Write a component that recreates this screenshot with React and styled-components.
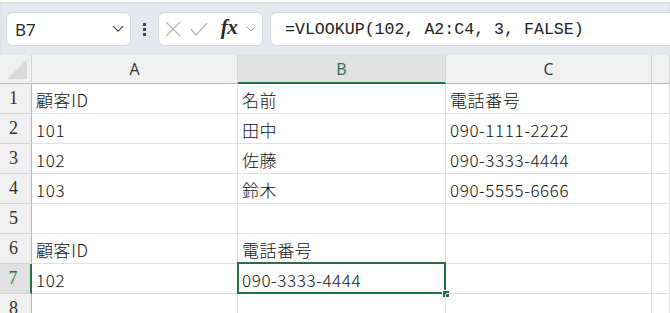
import React from 'react';
import styled, { createGlobalStyle } from 'styled-components';

const Global = createGlobalStyle`
  html, body { margin: 0; padding: 0; background: #fff; }
  body { font-family: "Noto Sans CJK JP", "Noto Sans", sans-serif; }
`;

const Page = styled.div`
  width: 670px;
  height: 313px;
  overflow: hidden;
  position: relative;
  background: #fff;
`;

const Toolbar = styled.div`
  height: 55px;
  box-sizing: border-box;
  background: #e5e8ee;
  padding: 10px 0 0 6px;
  display: flex;
  align-items: flex-start;
  border-top: 2px solid #fff;
  box-shadow: inset 0 1px 2px rgba(0,0,0,0.08);
`;

const Box = styled.div`
  height: 34px;
  box-sizing: border-box;
  background: #fff;
  border: 1px solid #d4d7dc;
  border-radius: 6px;
  display: flex;
  align-items: center;
`;

const NameBox = styled(Box)`
  width: 125px;
  padding: 0 6px 0 8px;
  justify-content: space-between;
  font-family: "Open Sans", "Liberation Sans", sans-serif;
  font-size: 17px;
  color: #222;
`;

const Dots = styled.div`
  width: 27px;
  height: 34px;
  display: flex;
  flex-direction: column;
  align-items: center;
  justify-content: center;
  gap: 2px;
  span {
    width: 3px;
    height: 3px;
    background: #444;
  }
`;

const FxBox = styled(Box)`
  width: 105px;
  padding: 0 6px;
  justify-content: space-between;
`;

const Fx = styled.span`
  font-family: "Liberation Serif", serif;
  font-style: italic;
  font-weight: bold;
  font-size: 21px;
  color: #2a2a2a;
  letter-spacing: -0.5px;
  margin-left: 4px;
  margin-top: -4px;
`;

const FormulaBox = styled(Box)`
  flex: 1;
  margin-left: 7px;
  margin-right: -10px;
  padding-left: 14px;
  font-family: "Liberation Mono", "DejaVu Sans Mono", monospace;
  font-size: 16.6px;
  color: #222;
`;

const Grid = styled.div`
  display: grid;
  grid-template-columns: 32px 206px 208px 206px 1fr;
  grid-auto-rows: 30px;
  grid-template-rows: 29px;
`;

const Corner = styled.div`
  background: #f0f0f0;
  border-right: 1px solid #d4d4d4;
  border-bottom: 1px solid #b9b9b9;
  position: relative;
  box-sizing: border-box;
  &::after {
    content: '';
    position: absolute;
    right: 4px;
    bottom: 4px;
    width: 0;
    height: 0;
    border-left: 20px solid transparent;
    border-bottom: 20px solid #d9d9d9;
  }
`;

const ColHead = styled.div`
  box-sizing: border-box;
  background: ${p => (p.$active ? '#e1e1e1' : '#f0f0f0')};
  color: ${p => (p.$active ? '#217346' : '#333')};
  border-right: 1px solid #d4d4d4;
  border-bottom: ${p => (p.$active ? '2px solid #217346' : '1px solid #b9b9b9')};
  display: flex;
  align-items: center;
  justify-content: center;
  font-family: "Open Sans", "Liberation Sans", sans-serif;
  font-size: 16px;
  padding-top: ${p => (p.$active ? '1px' : '0')};
`;

const RowHead = styled.div`
  box-sizing: border-box;
  background: ${p => (p.$active ? '#e1e1e1' : '#f0f0f0')};
  color: ${p => (p.$active ? '#217346' : '#333')};
  border-right: ${p => (p.$active ? '2px solid #217346' : '1px solid #b9b9b9')};
  border-bottom: 1px solid #d4d4d4;
  display: flex;
  align-items: center;
  justify-content: center;
  font-family: "Liberation Serif", "DejaVu Serif", serif;
  font-size: 18px;
  padding-right: 4px;
`;

const Cell = styled.div`
  box-sizing: border-box;
  border-right: 1px solid #e1e1e1;
  border-bottom: 1px solid #e1e1e1;
  display: flex;
  align-items: center;
  padding: 1px 0 0 4px;
  font-size: 17px;
  font-weight: 300;
  letter-spacing: 0.6px;
  color: #111;
  white-space: nowrap;
  position: relative;
`;

const Selection = styled.div`
  position: absolute;
  left: -1px;
  top: -2px;
  right: -1px;
  bottom: -1px;
  border: 2px solid #217346;
  pointer-events: none;
  &::after {
    content: '';
    position: absolute;
    right: -5px;
    bottom: -5px;
    width: 6px;
    height: 6px;
    background: #217346;
    border: 1px solid #fff;
    border-right: none;
    border-bottom: none;
  }
`;

const Chevron = ({ color = '#444', size = 12 }) => (
  <svg width={size} height={size * 0.6} viewBox="0 0 12 7" fill="none">
    <path d="M1 1l5 5 5-5" stroke={color} strokeWidth="1.2" />
  </svg>
);

const rows = [
  ['顧客ID', '名前', '電話番号'],
  ['101', '田中', '090-1111-2222'],
  ['102', '佐藤', '090-3333-4444'],
  ['103', '鈴木', '090-5555-6666'],
  ['', '', ''],
  ['顧客ID', '電話番号', ''],
  ['102', '090-3333-4444', ''],
  ['', '', ''],
];

export default function App() {
  return (
    <Page>
      <Global />
      <Toolbar>
        <NameBox>
          <span>B7</span>
          <Chevron />
        </NameBox>
        <Dots>
          <span />
          <span />
          <span />
        </Dots>
        <FxBox>
          <svg width="16" height="16" viewBox="0 0 16 16" fill="none">
            <path d="M1 1l14 14M15 1L1 15" stroke="#b5b5b5" strokeWidth="1.3" />
          </svg>
          <svg width="18" height="14" viewBox="0 0 18 14" fill="none">
            <path d="M1 7l5 6L17 1" stroke="#b5b5b5" strokeWidth="1.3" />
          </svg>
          <Fx>fx</Fx>
          <Chevron color="#999" size={10} />
        </FxBox>
        <FormulaBox>=VLOOKUP(102, A2:C4, 3, FALSE)</FormulaBox>
      </Toolbar>
      <Grid>
        <Corner />
        <ColHead>A</ColHead>
        <ColHead $active>B</ColHead>
        <ColHead>C</ColHead>
        <ColHead />
        {rows.map((r, i) => (
          <React.Fragment key={i}>
            <RowHead $active={i === 6}>{i + 1}</RowHead>
            <Cell>{r[0]}</Cell>
            <Cell>
              {r[1]}
              {i === 6 && <Selection />}
            </Cell>
            <Cell>{r[2]}</Cell>
            <Cell />
          </React.Fragment>
        ))}
      </Grid>
    </Page>
  );
}
